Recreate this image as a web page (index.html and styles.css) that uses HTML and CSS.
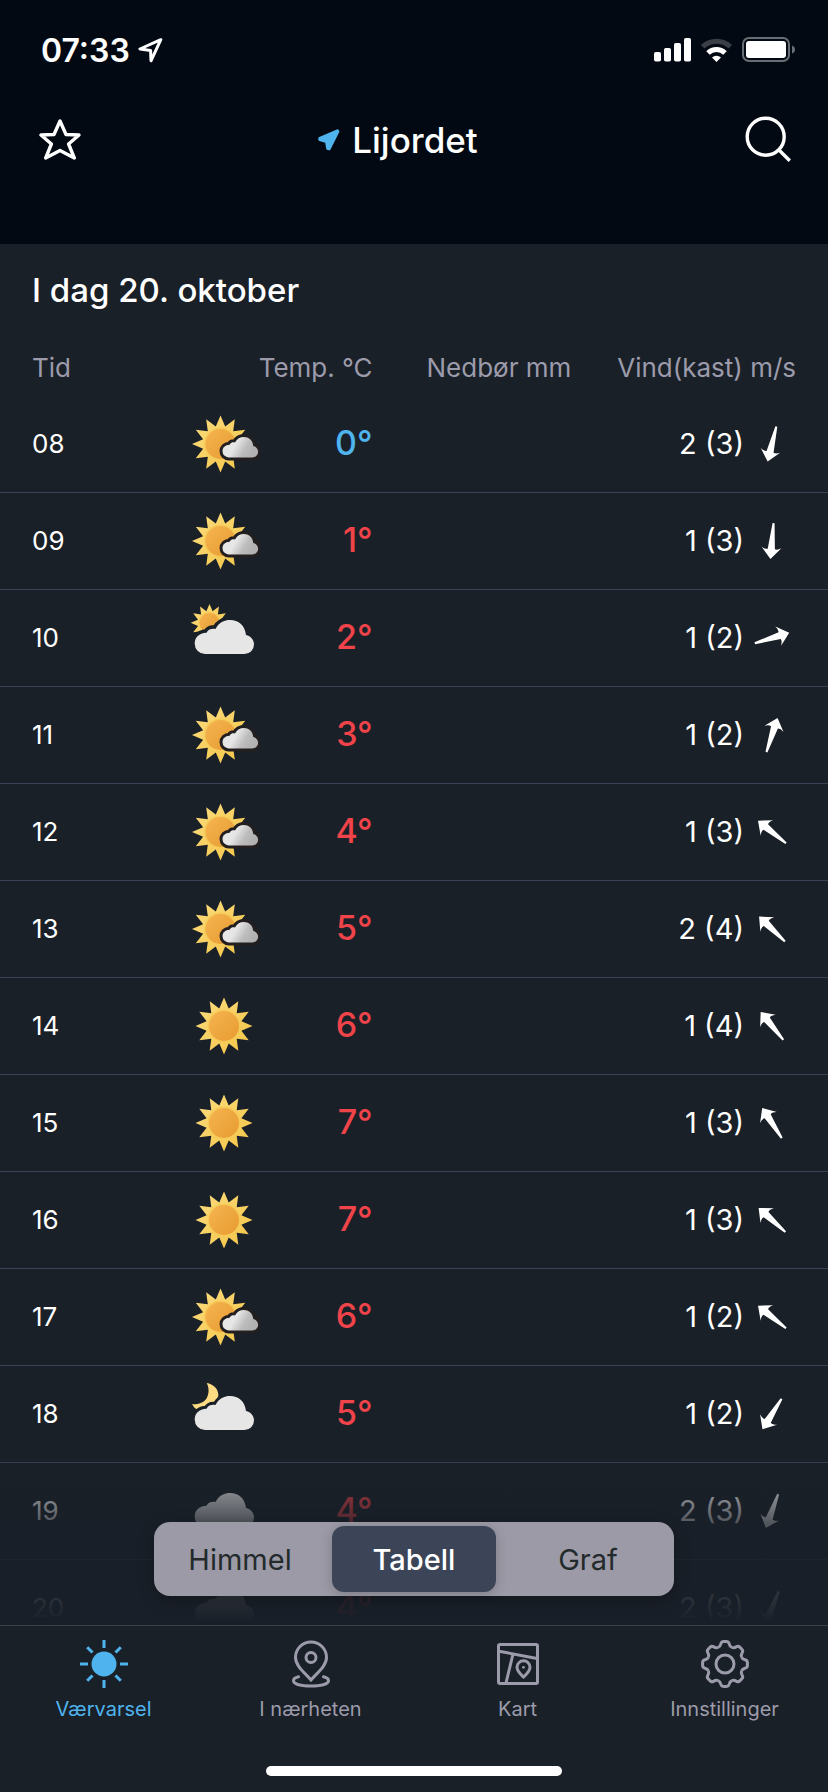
FILE: index.html
```html
<!DOCTYPE html>
<html lang="nb">
<head>
<meta charset="utf-8">
<meta name="viewport" content="width=device-width, initial-scale=1">
<title>Lijordet – Værvarsel</title>
<link rel="stylesheet" href="styles.css">
</head>
<body>
<svg class="sprite" aria-hidden="true">
  <defs>
    <linearGradient id="ray-fill" x1="0" y1="0" x2="1" y2="1">
      <stop offset="0" stop-color="#fcdc80"/><stop offset="1" stop-color="#f3c545"/>
    </linearGradient>
    <linearGradient id="disc-fill" x1="0" y1="0" x2="1" y2="1">
      <stop offset="0" stop-color="#f5b451"/><stop offset="1" stop-color="#e79b30"/>
    </linearGradient>
    <linearGradient id="cloud-fill" x1="0" y1="0" x2="1" y2="0.35">
      <stop offset="0.45" stop-color="#e6e6e6"/><stop offset="0.75" stop-color="#bdbdbd"/><stop offset="1" stop-color="#b2b2b2"/>
    </linearGradient>
    <g id="sun-shape">
      <path fill="url(#ray-fill)" d="M0-28.500L4.700-17.400L14.300-24.700L12.700-12.700L24.700-14.300L17.400-4.700L28.500 0L17.400 4.700L24.700 14.300L12.700 12.700L14.300 24.700L4.700 17.400L0 28.500L-4.700 17.400L-14.300 24.700L-12.700 12.700L-24.700 14.300L-17.400 4.700L-28.500 0L-17.400-4.700L-24.700-14.300L-12.700-12.700L-14.300-24.700L-4.700-17.400Z"/>
      <circle r="16.500" fill="#f6cb58"/>
      <circle r="15" fill="url(#disc-fill)"/>
    </g>
    <path id="cloud-shape" d="M17 52A10.300 10.300 0 0 1 6.700 41.700C6.700 35.500 11 31 18.500 30.800C20.500 27 24 26.500 27.500 27C31 20.500 36 18 42.300 18C50 18 57 23 58 33C63 34 66 38 66 42.500A9.500 9.500 0 0 1 56.500 52Z"/>
    <path id="gear-tooth" d="M-6.900-16.600C-5-17.400-4.600-18.200-4.200-20Q-3.600-22.400-1.500-22.400H1.500Q3.600-22.400 4.200-20C4.600-18.200 5-17.400 6.900-16.600"/>
  </defs>
  <symbol id="sun" viewBox="0 0 72 72"><use href="#sun-shape" x="36" y="36"/></symbol>
  <symbol id="fair" viewBox="0 0 72 72">
    <use href="#sun-shape" x="32.500" y="36"/>
    <g transform="translate(30.500 18.200) scale(.6)">
      <use href="#cloud-shape" fill="#231f20" stroke="#231f20" stroke-width="10"/>
      <use href="#cloud-shape" fill="url(#cloud-fill)"/>
    </g>
  </symbol>
  <symbol id="partly" viewBox="0 0 72 72">
    <g transform="translate(21.500 20.800) scale(.66)"><use href="#sun-shape"/></g>
    <use href="#cloud-shape" fill="#1a2027" stroke="#1a2027" stroke-width="7"/>
    <use href="#cloud-shape" fill="#e6e6e6"/>
  </symbol>
  <symbol id="partly-night" viewBox="0 0 72 72">
    <path fill="#fddb82" d="M18.700 5C25 6 31 11 30.300 18L26 28L10 32L6.700 30L4 26.300C11 26.500 16 24.500 18.500 20.500C21.500 15.500 21 9.500 18.700 5Z"/>
    <use href="#cloud-shape" fill="#1a2027" stroke="#1a2027" stroke-width="6"/>
    <use href="#cloud-shape" fill="#e6e6e6"/>
  </symbol>
  <symbol id="cloud" viewBox="0 0 72 72"><use href="#cloud-shape" fill="#e6e6e6"/></symbol>
  <symbol id="wind" viewBox="-24 -24 48 48">
    <path fill="#fff" d="M0-18L10-6.500Q6-9 3.600-8L1 18H-1L-3.600-8Q-6-9-10-6.500Z"/>
  </symbol>
</svg>

<div class="app">
  <header class="top">
    <div class="status">
      <span class="clock">07:33</span>
      <svg width="25" height="25" viewBox="0 0 25 25" fill="none" stroke="#fff" stroke-width="3" stroke-linejoin="round" aria-hidden="true"><path d="M22.800 1.700L1.900 11L12.600 12.400L13 22.800Z"/></svg>
      <span class="status-gap"></span>
      <svg width="37" height="24" viewBox="0 0 37 24" fill="#fff" aria-hidden="true"><rect y="14" width="7" height="9.500" rx="1.800"/><rect x="10" y="10" width="7" height="13.500" rx="1.800"/><rect x="20" y="5" width="7" height="18.500" rx="1.800"/><rect x="30" width="7" height="23.500" rx="1.800"/></svg>
      <svg width="31" height="24" viewBox="0 0 31 24" fill="none" stroke-width="5" aria-hidden="true"><path stroke="#3a3f47" d="M1.700 8.700A20 20 0 0 1 29.300 8.700"/><path stroke="#fff" d="M7 15A12.300 12.300 0 0 1 24 15"/><path fill="#fff" d="M15.500 24L11 19.500A6.400 6.400 0 0 1 20 19.500Z"/></svg>
      <svg width="53" height="26" viewBox="0 0 53 26" aria-hidden="true"><rect x="1" y="1" width="46" height="23" rx="6" fill="none" stroke="#696d74" stroke-width="2"/><rect x="4" y="4" width="40" height="17" rx="3" fill="#fff"/><path fill="#696d74" d="M50 8.500Q53 9.500 53 12.500T50 16.500Z"/></svg>
    </div>
    <div class="bar">
      <button class="icon-button" type="button" aria-label="Legg til favoritt">
        <svg width="42" height="42" viewBox="0 0 42 42" fill="none" stroke="#fff" stroke-width="3.400" stroke-linejoin="round"><path d="M21 2L27 15.500L40 16L29.600 25L35.300 39L21 31.500L6.700 39L12.400 25L2 16L15 15.500Z"/></svg>
      </button>
      <h1 class="place">
        <svg width="22" height="22" viewBox="0 0 22 22" fill="#4fb4ee" stroke="#4fb4ee" stroke-width="3" stroke-linejoin="round" aria-hidden="true"><path d="M19.500 1.900L1.800 9.500V10.500L8.500 12.500L9.700 19.600L11.200 19.800L19.800 2.500Z"/></svg>
        Lijordet
      </h1>
      <button class="icon-button end" type="button" aria-label="Søk">
        <svg width="48" height="48" viewBox="0 0 48 48" fill="none" stroke="#fff" stroke-width="3.400"><circle cx="22.700" cy="20.700" r="18.500"/><path d="M36.500 34.500L46.800 44.800"/></svg>
      </button>
    </div>
  </header>

  <main class="forecast">
    <div class="scroller">
      <h2 class="day">I dag 20. oktober</h2>
      <table class="hours">
        <colgroup><col class="c-time"><col class="c-icon"><col class="c-temp"><col class="c-rain"><col></colgroup>
        <thead>
          <tr><th class="time" scope="col">Tid</th><th scope="col" colspan="2">Temp. °C</th><th scope="col">Nedbør mm</th><th class="wind" scope="col">Vind(kast) m/s</th></tr>
        </thead>
        <tbody>
          <tr><td class="time">08</td><td class="symbol"><svg><use href="#fair"/></svg></td><td class="temp cold">0°</td><td></td><td class="wind"><span>2 (3)<svg><use href="#wind" transform="rotate(194 24 24)"/></svg></span></td></tr>
          <tr><td class="time">09</td><td class="symbol"><svg><use href="#fair"/></svg></td><td class="temp">1°</td><td></td><td class="wind"><span>1 (3)<svg><use href="#wind" transform="rotate(185 24 24)"/></svg></span></td></tr>
          <tr><td class="time">10</td><td class="symbol"><svg><use href="#partly"/></svg></td><td class="temp">2°</td><td></td><td class="wind"><span>1 (2)<svg><use href="#wind" transform="rotate(73 24 24)"/></svg></span></td></tr>
          <tr><td class="time">11</td><td class="symbol"><svg><use href="#fair"/></svg></td><td class="temp">3°</td><td></td><td class="wind"><span>1 (2)<svg><use href="#wind" transform="rotate(18 24 24)"/></svg></span></td></tr>
          <tr><td class="time">12</td><td class="symbol"><svg><use href="#fair"/></svg></td><td class="temp">4°</td><td></td><td class="wind"><span>1 (3)<svg><use href="#wind" transform="rotate(-51 24 24)"/></svg></span></td></tr>
          <tr><td class="time">13</td><td class="symbol"><svg><use href="#fair"/></svg></td><td class="temp">5°</td><td></td><td class="wind"><span>2 (4)<svg><use href="#wind" transform="rotate(-46 24 24)"/></svg></span></td></tr>
          <tr><td class="time">14</td><td class="symbol"><svg><use href="#sun"/></svg></td><td class="temp">6°</td><td></td><td class="wind"><span>1 (4)<svg><use href="#wind" transform="rotate(-39 24 24)"/></svg></span></td></tr>
          <tr><td class="time">15</td><td class="symbol"><svg><use href="#sun"/></svg></td><td class="temp">7°</td><td></td><td class="wind"><span>1 (3)<svg><use href="#wind" transform="rotate(-33 24 24)"/></svg></span></td></tr>
          <tr><td class="time">16</td><td class="symbol"><svg><use href="#sun"/></svg></td><td class="temp">7°</td><td></td><td class="wind"><span>1 (3)<svg><use href="#wind" transform="rotate(-48 24 24)"/></svg></span></td></tr>
          <tr><td class="time">17</td><td class="symbol"><svg><use href="#fair"/></svg></td><td class="temp">6°</td><td></td><td class="wind"><span>1 (2)<svg><use href="#wind" transform="rotate(-51 24 24)"/></svg></span></td></tr>
          <tr><td class="time">18</td><td class="symbol"><svg><use href="#partly-night"/></svg></td><td class="temp">5°</td><td></td><td class="wind"><span>1 (2)<svg><use href="#wind" transform="rotate(212 24 24)"/></svg></span></td></tr>
          <tr><td class="time">19</td><td class="symbol"><svg><use href="#cloud"/></svg></td><td class="temp">4°</td><td></td><td class="wind"><span>2 (3)<svg><use href="#wind" transform="rotate(200 24 24)"/></svg></span></td></tr>
          <tr><td class="time">20</td><td class="symbol"><svg><use href="#cloud"/></svg></td><td class="temp">4°</td><td></td><td class="wind"><span>2 (3)<svg><use href="#wind" transform="rotate(202 24 24)"/></svg></span></td></tr>
        </tbody>
      </table>
    </div>
    <div class="fade"></div>
    <div class="views" role="group" aria-label="Visning">
      <button type="button" aria-pressed="false">Himmel</button>
      <button type="button" class="selected" aria-pressed="true">Tabell</button>
      <button type="button" aria-pressed="false">Graf</button>
    </div>
  </main>

  <footer class="bottom">
    <nav class="tabs">
      <a class="active" href="#varsel" aria-current="page">
        <svg viewBox="0 0 48 48" stroke-width="3.500"><circle cx="24" cy="24" r="12.500" fill="currentColor" stroke="none"/><path d="M24 0V8M24 40V48M0 24H8M40 24H48M7.200 7.200L12.500 12.500M35.500 35.500L40.800 40.800M7.200 40.800L12.500 35.500M35.500 12.500L40.800 7.200"/></svg>
        Værvarsel
      </a>
      <a href="#naerheten">
        <svg viewBox="0 0 48 48"><path d="M24 40C18 33 8.500 26 8.500 17.500A15.500 15.500 0 0 1 39.500 17.500C39.500 26 30 33 24 40Z"/><circle cx="24" cy="17.500" r="5"/><path stroke-linecap="round" d="M11.500 36.800C8.500 37.600 6.500 38.800 6.500 40.500C6.500 44 14 46 24 46S41.500 44 41.500 40.500C41.500 38.800 39.500 37.600 36.500 36.800"/></svg>
        I nærheten
      </a>
      <a href="#kart">
        <svg viewBox="0 0 48 48"><rect x="4.500" y="4.500" width="39" height="39" rx="1.500"/><path d="M5 11.200L43 18.500M19 14L12 43"/><path d="M29.500 37C27 34.500 23 31.500 23 27.300A6.500 6.500 0 0 1 36 27.300C36 31.500 32 34.500 29.500 37Z"/><circle cx="29.500" cy="27.300" r="1.400" fill="currentColor" stroke="none"/></svg>
        Kart
      </a>
      <a href="#innstillinger">
        <svg viewBox="-24 -24 48 48"><circle r="9"/><use href="#gear-tooth"/><use href="#gear-tooth" transform="rotate(45)"/><use href="#gear-tooth" transform="rotate(90)"/><use href="#gear-tooth" transform="rotate(135)"/><use href="#gear-tooth" transform="rotate(180)"/><use href="#gear-tooth" transform="rotate(225)"/><use href="#gear-tooth" transform="rotate(270)"/><use href="#gear-tooth" transform="rotate(315)"/></svg>
        Innstillinger
      </a>
    </nav>
    <div class="home-indicator"></div>
  </footer>
</div>
</body>
</html>
```
FILE: styles.css
```css
:root {
  --bg: #1a2027;
  --top: #020912;
  --muted: #9c9bab;
  --line: #3a4256;
  --blue: #4fb4ee;
  --red: #f0434a;
}

* { box-sizing: border-box; }

body {
  margin: 0;
  background: var(--bg);
  color: #fff;
  font-family: Inter, "Liberation Sans", sans-serif;
}

button {
  padding: 0;
  border: 0;
  background: none;
  color: inherit;
  font: inherit;
}

svg { display: block; flex: none; }

.sprite {
  position: absolute;
  width: 0;
  height: 0;
}

.app {
  display: flex;
  flex-direction: column;
  height: 100vh;
}

/* Header */
.top {
  flex: none;
  padding-bottom: 72px;
  background: var(--top);
}

.status {
  display: flex;
  align-items: center;
  height: 100px;
  padding: 0 33px 0 41px;
}

.clock {
  margin-right: 8px;
  font-size: 32px;
  font-weight: 600;
}

.status-gap { flex: 1; }
.status svg + svg { margin-left: 10px; }

.bar {
  display: grid;
  grid-template-columns: 1fr auto 1fr;
  align-items: center;
  height: 72px;
  padding: 8px 37px 0 39px;
}

.icon-button { justify-self: start; }
.icon-button.end { justify-self: end; }

.place {
  display: flex;
  align-items: center;
  gap: 12px;
  margin: 0;
  padding-right: 34px;
  font-size: 35px;
  font-weight: 500;
}

/* Forecast */
.forecast {
  position: relative;
  flex: 1;
  min-height: 0;
}

.scroller {
  height: 100%;
  overflow-y: auto;
  scrollbar-width: none;
}

.day {
  margin: 0;
  padding: 26px 32px 30px;
  font-size: 33px;
  font-weight: 500;
  line-height: 40px;
}

.hours {
  width: 100%;
  table-layout: fixed;
  border-spacing: 0;
}

.c-time { width: 21%; }
.c-icon { width: 12%; }
.c-temp { width: 12%; }
.c-rain { width: 24%; }

.hours th {
  height: 56px;
  padding: 0 0 2px;
  color: var(--muted);
  font-size: 26px;
  font-weight: 400;
  text-align: right;
  white-space: nowrap;
}

.hours td {
  height: 97px;
  padding: 0;
  border-bottom: 1px solid var(--line);
  font-size: 26px;
}

.hours td.time { padding-bottom: 2px; }

.hours .time {
  padding-left: 32px;
  text-align: left;
}

.hours .wind { padding-right: 32px; }

.symbol svg {
  width: 72px;
  height: 72px;
  margin: 0 auto;
}

.hours .temp {
  padding-bottom: 2px;
  color: var(--red);
  font-size: 34px;
  font-weight: 500;
  line-height: 34px;
  text-align: right;
}

.hours .cold { color: var(--blue); }

.wind span {
  display: flex;
  align-items: center;
  justify-content: flex-end;
  gap: 4px;
  font-size: 29px;
  line-height: 32px;
}

.wind svg {
  width: 48px;
  height: 48px;
}

.fade {
  position: absolute;
  inset: auto 0 0;
  height: 170px;
  background: linear-gradient(
    rgb(25 31 40 / 0),
    rgb(25 31 40 / .45) 20%,
    rgb(25 31 40 / .75) 40%,
    rgb(25 31 40 / .88) 65%,
    rgb(25 31 40 / .92) 85%,
    rgb(25 31 40) 98%
  );
  pointer-events: none;
}

.views {
  position: absolute;
  inset: auto 0 29px;
  display: grid;
  grid-template-columns: repeat(3, 1fr);
  gap: 10px;
  width: 90%;
  max-width: 520px;
  height: 74px;
  margin: 0 auto;
  padding: 4px;
  border-radius: 16px;
  background: #9b9aa6;
  box-shadow: 0 4px 16px rgb(0 0 0 / .25);
  color: #232a2c;
  font-size: 29px;
}

.views button { border-radius: 12px; }

.views .selected {
  background: #3b4557;
  box-shadow: 0 2px 12px rgb(0 0 0 / .2);
  color: #fff;
  font-weight: 500;
}

/* Bottom navigation */
.bottom {
  flex: none;
  padding-bottom: 16px;
  border-top: 1px solid #3c4046;
}

.tabs {
  display: grid;
  grid-template-columns: repeat(4, 1fr);
  padding: 14px 0 45px;
}

.tabs a {
  display: flex;
  flex-direction: column;
  align-items: center;
  gap: 9px;
  color: var(--muted);
  font-size: 20px;
  line-height: 24px;
  text-decoration: none;
}

.tabs .active { color: var(--blue); }

.tabs svg {
  width: 48px;
  height: 48px;
  fill: none;
  stroke: currentColor;
  stroke-width: 3;
}

.home-indicator {
  width: 296px;
  height: 10px;
  margin: 0 auto;
  border-radius: 5px;
  background: #fff;
}
```
